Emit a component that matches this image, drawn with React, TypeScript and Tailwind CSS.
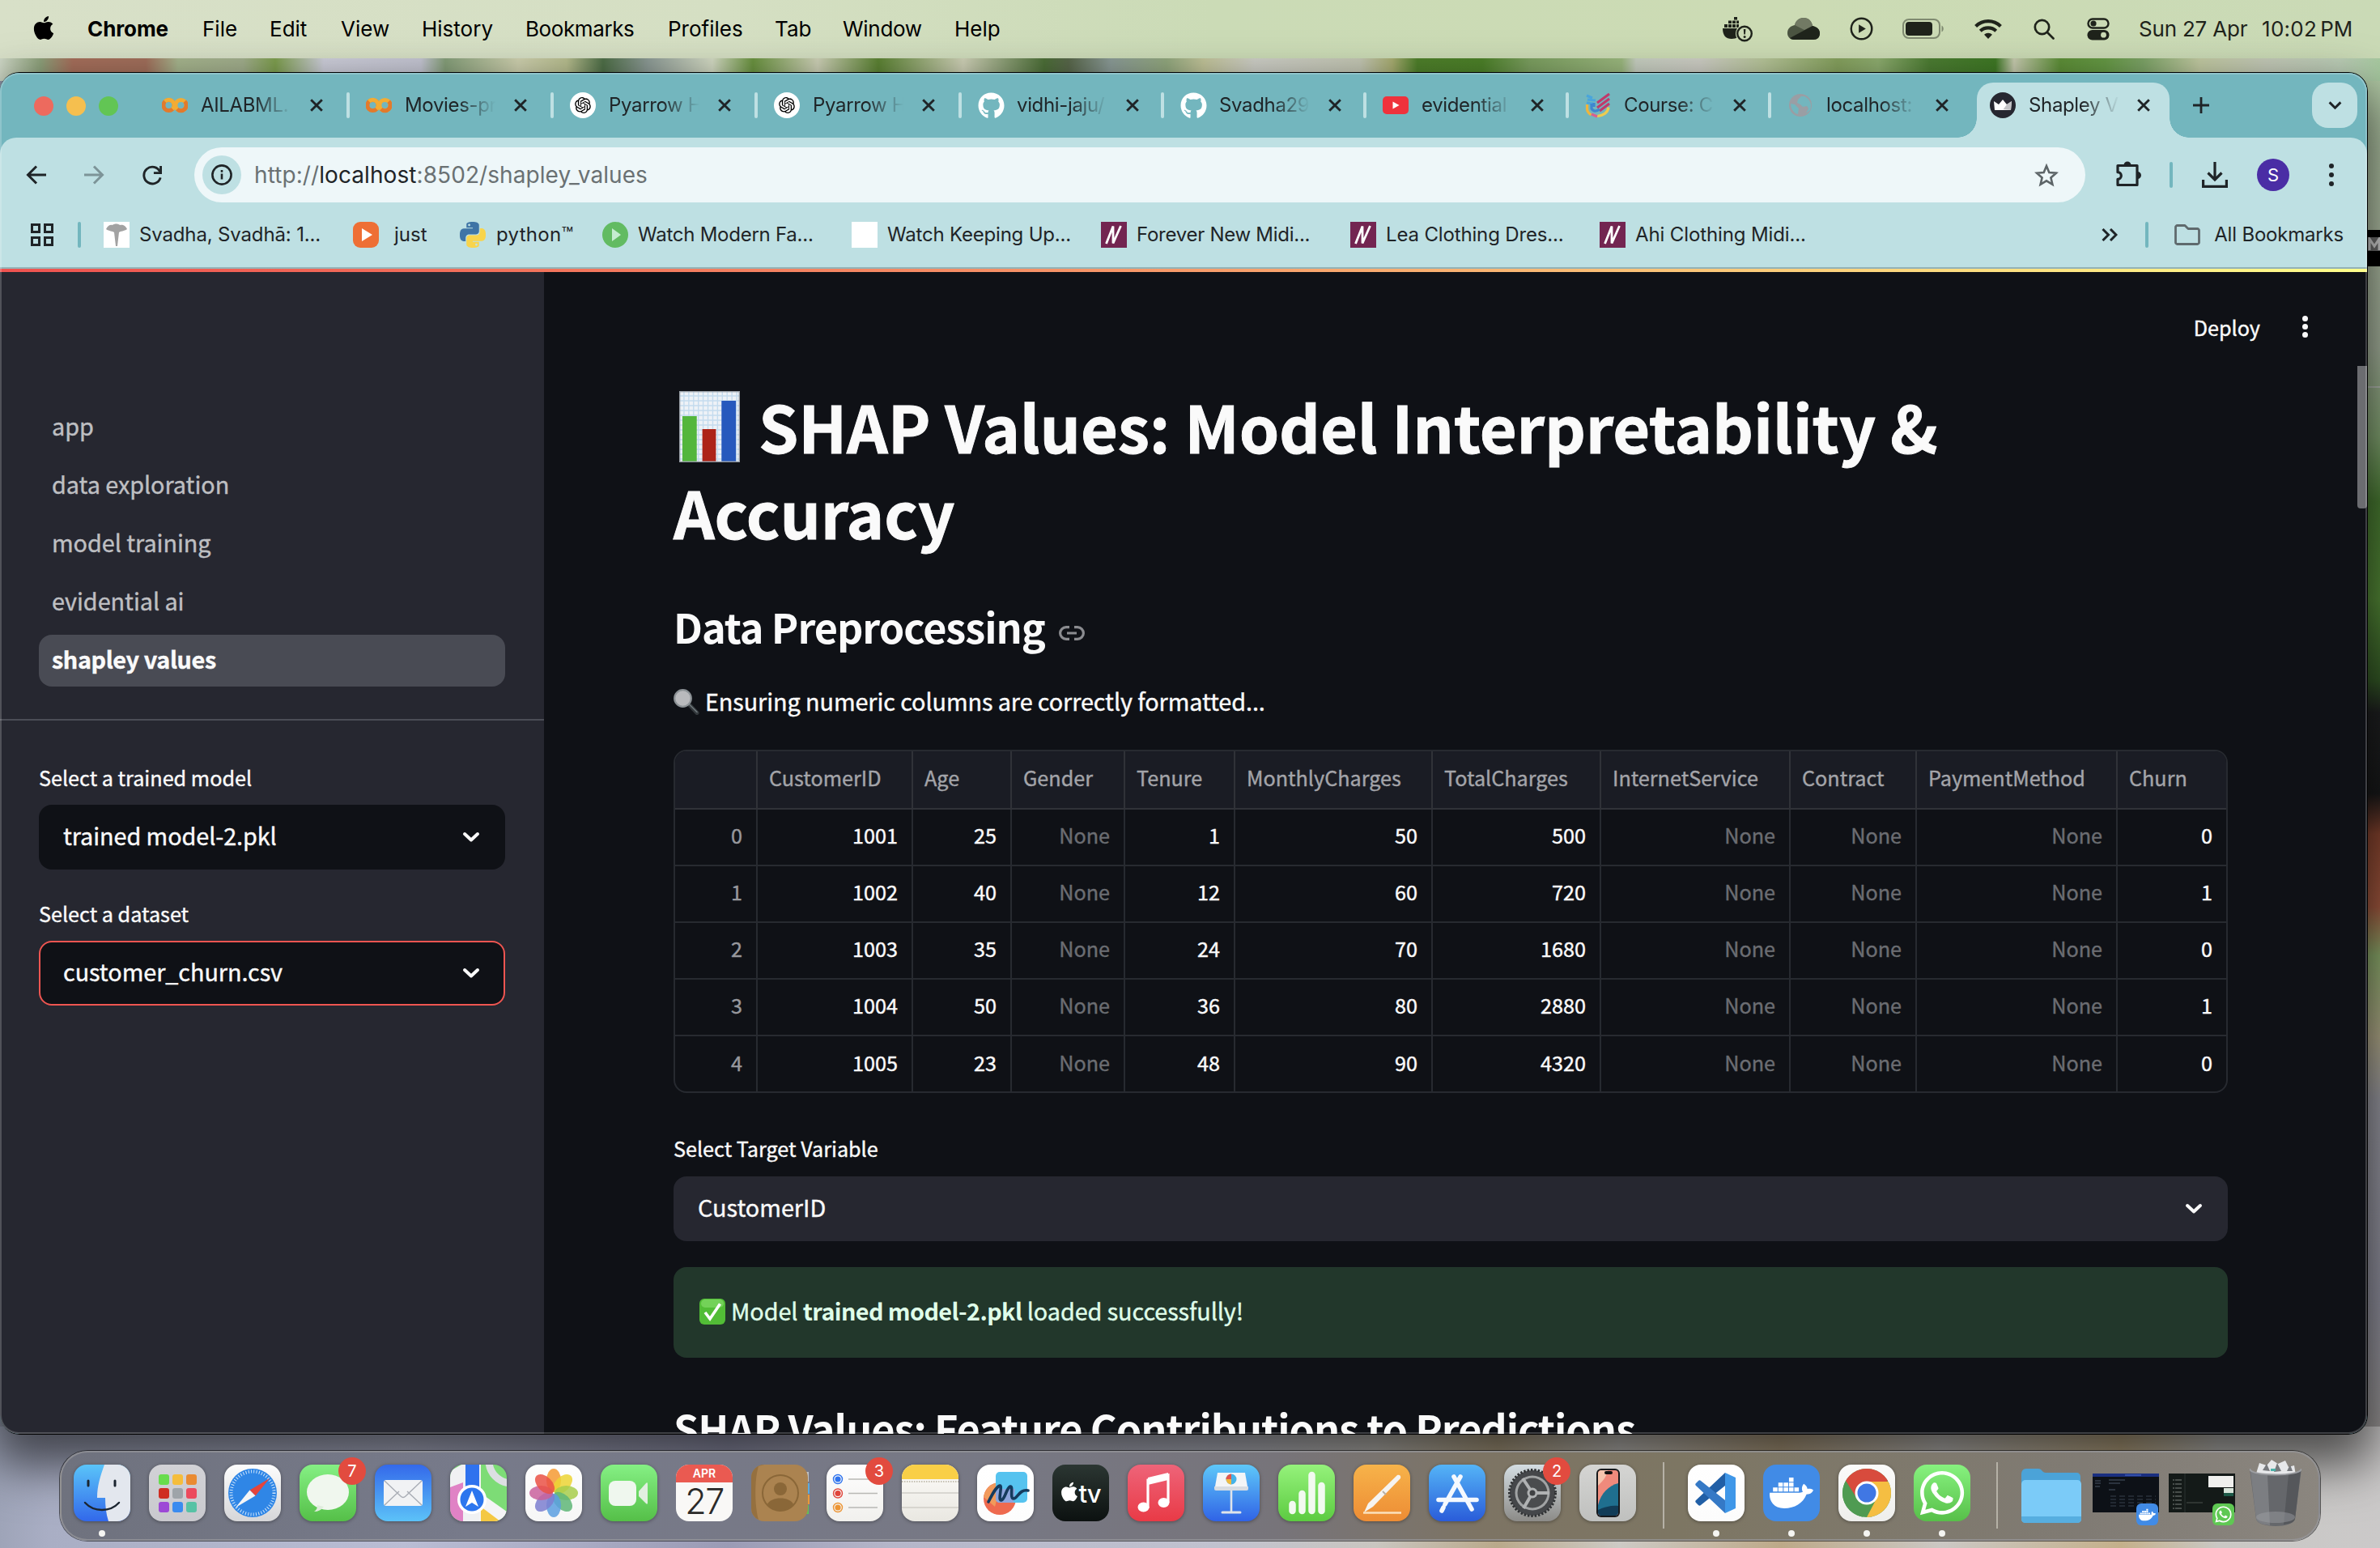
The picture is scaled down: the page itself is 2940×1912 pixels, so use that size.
import React from "react";
import { FaApple, FaDocker, FaGithub, FaWhatsapp } from "react-icons/fa";
import { RiOpenaiFill } from "react-icons/ri";

const SF = "font-['Inter',sans-serif]";
const SOURCE = "font-['Noto_Sans_CJK_SC',sans-serif] [-webkit-text-stroke:0.4px]";

/* ------------------------------------------------------------------ */
/* Menu bar                                                            */
/* ------------------------------------------------------------------ */

const menus = [
  { label: "File", w: "w-[83px]", t: "" },
  { label: "Edit", w: "w-[88px]", t: "" },
  { label: "View", w: "w-[100px]", t: "" },
  { label: "History", w: "w-[128px]", t: "" },
  { label: "Bookmarks", w: "w-[176px]", t: "tracking-[-0.4px]" },
  { label: "Profiles", w: "w-[132px]", t: "" },
  { label: "Tab", w: "w-[84px]", t: "" },
  { label: "Window", w: "w-[138px]", t: "tracking-[-0.3px]" },
  { label: "Help", w: "w-[80px]", t: "" },
];

function MenuBar() {
  return (
    <header className="flex h-[72px] w-full items-center bg-[linear-gradient(90deg,#d8e0c8_0px,#d5dfc3_900px,#cbdbb6_1500px,#ccdbb4_2200px,#cadab6_2940px)] pb-[1px] text-[26px] leading-none text-black">
      <FaApple className="mb-[2px] ml-[38px] h-[33px] w-[32px] shrink-0" />
      <div className="ml-[38px] w-[142px] shrink-0 font-bold tracking-[-0.1px]">Chrome</div>
      {menus.map((m) => (
        <div key={m.label} className={`${m.w} ${m.t} shrink-0`}>
          {m.label}
        </div>
      ))}
      <div className="grow" />
      <div className="flex shrink-0 items-center text-[#1f231b]">
        <svg viewBox="0 0 40 32" className="h-[32px] w-[40px]" fill="currentColor">
          <path d="M2 15h25l-1 4c-2 6-7 9-13 9C6 28 2 24 2 15z" />
          <path d="M4 10h4v4H4zM9 10h4v4H9zM14 10h4v4h-4zM19 10h3v4h-3zM9 5.500h4v3.500H9zM14 5.500h4v3.500h-4zM16 1h4v3.500h-4zM19 5.500h3v3.500h-3z" />
          <circle cx="29" cy="21.500" r="11" fill="#cbdab5" />
          <circle cx="29" cy="21.500" r="8.800" fill="none" stroke="currentColor" strokeWidth="2.400" />
          <path d="M27.800 16h2.600l-.5 6.500h-1.600z" />
          <circle cx="29.100" cy="25.500" r="1.500" />
        </svg>
        <svg viewBox="0 0 40 27" className="ml-[42px] h-[27px] w-[40px]">
          <path d="M20 0c-6 0-10 4-11 9C4 10 0 13 0 19c0 4 3 8 8 8h24c5 0 8-3 8-8 0-5-4-8-9-9C30 4 26 0 20 0z" fill="#4c5542" />
          <path d="M20 0c-6 0-10 4-11 9l12 6 10-5C30 4 26 0 20 0z" fill="#727a64" />
          <path d="M3 25l28-15c5 1 9 4 9 9 0 5-3 8-8 8H8c-2 0-4-1-5-2z" fill="#20251c" />
        </svg>
        <svg viewBox="0 0 30 30" className="ml-[37px] h-[29px] w-[29px]">
          <circle cx="15" cy="15" r="13.200" fill="none" stroke="currentColor" strokeWidth="2.600" />
          <path d="M11.500 9.500v11l9-5.500z" fill="currentColor" />
        </svg>
        <svg viewBox="0 0 52 26" className="ml-[36px] h-[26px] w-[52px]">
          <rect x="1" y="1" width="45" height="23" rx="7" fill="none" stroke="#7f8a70" strokeWidth="2" />
          <rect x="4" y="4" width="33" height="17" rx="4" fill="currentColor" />
          <path d="M48.500 8.500c3 1.500 3 6.500 0 8z" fill="#7f8a70" />
        </svg>
        <svg viewBox="0 0 34 26" className="ml-[37px] h-[26px] w-[34px]" fill="none" stroke="currentColor" strokeWidth="4.200">
          <path d="M1.600 9.500a22 22 0 0 1 30.800 0" />
          <path d="M7.300 15.200a14 14 0 0 1 19.400 0" />
          <path d="M17 25l-5-5.200a7 7 0 0 1 10 0z" fill="currentColor" stroke="none" />
        </svg>
        <svg viewBox="0 0 26 26" className="ml-[39px] h-[26px] w-[26px]" fill="none" stroke="currentColor" strokeWidth="2.700" strokeLinecap="round">
          <circle cx="10.500" cy="10.500" r="8.700" />
          <path d="M17 17l7.500 7.500" />
        </svg>
        <svg viewBox="0 0 28 28" className="ml-[40px] h-[28px] w-[28px]">
          <rect x="1.500" y="1.500" width="25" height="11" rx="5.500" fill="none" stroke="currentColor" strokeWidth="2.400" />
          <circle cx="8" cy="7" r="3.600" fill="currentColor" />
          <rect x="0.500" y="15" width="27" height="12.500" rx="6.200" fill="currentColor" />
          <circle cx="20.500" cy="21.200" r="3.400" fill="#cbdab5" />
        </svg>
        <div className="ml-[36px] w-[152px] whitespace-nowrap tracking-[-0.2px]">Sun 27 Apr</div>
        <div className="flex w-[146px] gap-[4px] whitespace-nowrap tracking-[0.300px]">
          <span>10:02</span>
          <span className="tracking-[-0.2px]">PM</span>
        </div>
      </div>
    </header>
  );
}

/* ------------------------------------------------------------------ */
/* Tab strip                                                           */
/* ------------------------------------------------------------------ */

const Colab = () => (
  <svg viewBox="0 0 32 32" className="h-[32px] w-[32px]" fill="none" strokeWidth="5">
    <circle cx="8.500" cy="16" r="6.600" stroke="#e27a2c" />
    <circle cx="23.500" cy="16" r="6.600" stroke="#f3ac33" />
    <path d="M28.200 11.300a6.600 6.600 0 0 1-9.400 9.400" stroke="#e27a2c" />
    <path d="M13.200 11.300a6.600 6.600 0 0 0-9.400 0M13.200 11.300a6.600 6.600 0 0 1 0 9.400" stroke="#f3ac33" />
  </svg>
);

const OpenAI = () => (
  <div className="flex h-[32px] w-[32px] items-center justify-center rounded-full bg-white text-black">
    <RiOpenaiFill className="h-[24px] w-[24px]" />
  </div>
);

const GitHub = () => <FaGithub className="h-[33px] w-[33px] text-white" />;

const YouTube = () => (
  <svg viewBox="0 0 32 32" className="h-[32px] w-[32px]">
    <rect y="5" width="32" height="22" rx="5" fill="#ef323c" />
    <path d="M12.500 11.500v9l8-4.500z" fill="#fff" />
  </svg>
);

const Course = () => (
  <svg viewBox="0 0 32 32" className="h-[32px] w-[32px]" fill="none" strokeWidth="3.200">
    <path d="M2 4l7 3M3 9l10 1M2 13l8 1" stroke="#4aa5dc" />
    <path d="M30 2L15 13M30 8L15 19M30 14L18 23" stroke="#c03a6b" />
    <path d="M8 14v6c2 4 6 4 10 1M11 13v5" stroke="#3f86cf" />
    <path d="M2.500 15v5c0 3 2 6 5 8" stroke="#f0b53c" />
    <path d="M15 29.500c8-1 13-4 14-11" stroke="#eecb50" />
    <path d="M8 27l7 3" stroke="#d9608e" />
  </svg>
);

const Globe = () => (
  <svg viewBox="0 0 32 32" className="h-[32px] w-[32px]">
    <circle cx="16" cy="16" r="14" fill="#9a9ea4" />
    <path d="M17 5l-4 4-1 4 4 2 3 3 5-1 2 3-3 6 5-4c3-8-1-14-7-17zM4 14l5 1 5 5-1 7-3-1C6 23 4 19 4 14z" fill="#73b6be" />
  </svg>
);

const Crown = () => (
  <svg viewBox="0 0 32 32" className="h-[32px] w-[32px]">
    <circle cx="16" cy="16" r="16" fill="#262730" />
    <path d="M6 22L5 11l6 4 5-6 5 6 6-4-1 11z" fill="#fff" />
    <path d="M16 9l5 6-5 7h10l1-11-6 4z" fill="#c3c3c6" />
    <path d="M6 22l10-1 10 1z" fill="#fff" />
  </svg>
);

const TabClose = () => (
  <svg viewBox="0 0 16 16" className="h-[16px] w-[16px] shrink-0" fill="none" stroke="#1f2427" strokeWidth="2.900">
    <path d="M1.200 1.200l13.600 13.600M14.800 1.200L1.200 14.800" />
  </svg>
);

const tabs = [
  { icon: <Colab />, title: "AILABML.", w: "w-[252px]", sep: true },
  { icon: <Colab />, title: "Movies-pr", w: "w-[252px]", sep: true },
  { icon: <OpenAI />, title: "Pyarrow H", w: "w-[252px]", sep: true },
  { icon: <OpenAI />, title: "Pyarrow H", w: "w-[252px]", sep: true },
  { icon: <GitHub />, title: "vidhi-jaju/", w: "w-[250px]", sep: true },
  { icon: <GitHub />, title: "Svadha29", w: "w-[250px]", sep: true },
  { icon: <YouTube />, title: "evidential", w: "w-[250px]", sep: true },
  { icon: <Course />, title: "Course: C", w: "w-[250px]", sep: true },
  { icon: <Globe />, title: "localhost:", w: "w-[254px]", sep: false },
];

const FADE =
  "[mask-image:linear-gradient(90deg,#000_0px,#000_66px,transparent_112px)]";

function TabTitle({ children }: { children: React.ReactNode }) {
  return (
    <div className={`ml-[15px] w-[112px] shrink-0 whitespace-nowrap text-[24px] leading-[32px] tracking-[-0.350px] text-[#1f2427] ${FADE}`}>
      {children}
    </div>
  );
}

function TabStrip() {
  return (
    <div className="flex h-[80px] shrink-0 items-stretch bg-[#73b6be]">
      <div className="flex w-[180px] shrink-0 items-center gap-[16px] pl-[42px] pt-[2px]">
        <div className="h-[24px] w-[24px] rounded-full bg-[#ed6a5e]" />
        <div className="h-[24px] w-[24px] rounded-full bg-[#f5bf4f]" />
        <div className="h-[24px] w-[24px] rounded-full bg-[#62c554]" />
      </div>
      {tabs.map((t, i) => (
        <div key={i} className={`${t.w} flex shrink-0 items-center pl-[20px]`}>
          <div className="w-[33px] shrink-0">{t.icon}</div>
          <TabTitle>{t.title}</TabTitle>
          <div className="ml-[23px]">
            <TabClose />
          </div>
          <div className="grow" />
          {t.sep && <div className="h-[32px] w-[4px] rounded-full bg-[#bee0e3]" />}
        </div>
      ))}
      <div className="relative mt-[12px] flex w-[238px] shrink-0 items-center rounded-t-[20px] bg-[#bee0e3] pb-[12px] pl-[16px]">
        <div className="absolute bottom-0 left-[-24px] h-[24px] w-[24px] bg-[radial-gradient(circle_at_0_0,transparent_23.500px,#bee0e3_24px)]" />
        <div className="absolute bottom-0 right-[-24px] h-[24px] w-[24px] bg-[radial-gradient(circle_at_100%_0,transparent_23.500px,#bee0e3_24px)]" />
        <div className="w-[33px] shrink-0">
          <Crown />
        </div>
        <TabTitle>Shapley V</TabTitle>
        <div className="ml-[22px]">
          <TabClose />
        </div>
      </div>
      <div className="ml-[29px] flex items-center">
        <svg viewBox="0 0 20 20" className="h-[20px] w-[20px]" stroke="#1f2427" strokeWidth="2.800">
          <path d="M10 0v20M0 10h20" />
        </svg>
      </div>
      <div className="grow" />
      <div className="mr-[12px] mt-[12px] flex h-[56px] w-[56px] items-center justify-center rounded-[20px] bg-[#bee0e3]">
        <svg viewBox="0 0 18 12" className="h-[11px] w-[17px]" fill="none" stroke="#1f2427" strokeWidth="3.200">
          <path d="M1.500 1.500L9 9l7.500-7.500" />
        </svg>
      </div>
    </div>
  );
}

/* ------------------------------------------------------------------ */
/* Toolbar and bookmarks                                               */
/* ------------------------------------------------------------------ */

function Toolbar() {
  return (
    <div className="flex h-[80px] shrink-0 items-center pt-[12px] text-[#1f2427]">
      <svg viewBox="0 0 26 24" className="ml-[32px] h-[24px] w-[26px] shrink-0" fill="none" stroke="currentColor" strokeWidth="3">
        <path d="M25 12H3M13 1.500L2.500 12 13 22.500" />
      </svg>
      <svg viewBox="0 0 26 24" className="ml-[45px] h-[24px] w-[26px] shrink-0" fill="none" stroke="#7d9498" strokeWidth="3">
        <path d="M1 12h22M13 1.500L23.500 12 13 22.500" />
      </svg>
      <svg viewBox="0 0 26 26" className="ml-[46px] h-[25px] w-[26px] shrink-0" fill="none" stroke="currentColor" strokeWidth="3">
        <path d="M23 8.500A10.800 10.800 0 1 0 23.600 16" />
        <path d="M24 1v9h-9" />
      </svg>
      <div className="ml-[39px] flex h-[68px] w-[2336px] shrink-0 items-center rounded-full bg-[#eef7f9] pl-[10px]">
        <div className="flex h-[48px] w-[48px] shrink-0 items-center justify-center rounded-full bg-[#bee0e3]">
          <svg viewBox="0 0 26 26" className="h-[26px] w-[26px]" fill="none" stroke="#1f2427" strokeWidth="2.600">
            <circle cx="13" cy="13" r="11.600" />
            <path d="M13 11.500v7M13 7v2.800" />
          </svg>
        </div>
        <div className="ml-[16px] whitespace-nowrap text-[28px] leading-none tracking-[0.080px] text-[#6a7173]">
          http://<span className="text-[#1f2427]">localhost</span>:8502/shapley_values
        </div>
        <div className="grow" />
        <svg viewBox="0 0 30 29" className="mr-[33px] h-[29px] w-[30px]" fill="none" stroke="#5d6568" strokeWidth="2.600">
          <path d="M15 3l3.300 8 8.700.7-6.600 5.700 2 8.400L15 21.300l-7.400 4.500 2-8.400L3 11.700l8.700-.7z" />
        </svg>
      </div>
      <svg viewBox="0 0 34 34" className="mb-[2px] ml-[37px] h-[34px] w-[34px] shrink-0" fill="none" stroke="currentColor" strokeWidth="3.200">
        <path d="M3 6.500h24v24H3v-7.200a4.200 4.200 0 0 0 0-8.600z" strokeLinejoin="round" />
        <path d="M10.500 6a4.500 4.500 0 0 1 9 0zM27.500 14a4.500 4.500 0 0 1 0 9z" fill="currentColor" stroke="none" />
      </svg>
      <div className="ml-[33px] h-[32px] w-[4px] shrink-0 rounded-full bg-[#73b6be]" />
      <svg viewBox="0 0 32 32" className="ml-[36px] h-[32px] w-[32px] shrink-0" fill="none" stroke="currentColor" strokeWidth="3.200">
        <path d="M16 0v21M7.500 13.500L16 22l8.500-8.500M1.600 22v8.400h28.800V22" />
      </svg>
      <div className="ml-[36px] flex h-[40px] w-[40px] shrink-0 items-center justify-center rounded-full bg-[#4a2da5] text-[22px] leading-none text-white">
        S
      </div>
      <div className="ml-[49px] flex flex-col items-center gap-[5px]">
        <div className="h-[6px] w-[6px] rounded-full bg-[#1f2427]" />
        <div className="h-[6px] w-[6px] rounded-full bg-[#1f2427]" />
        <div className="h-[6px] w-[6px] rounded-full bg-[#1f2427]" />
      </div>
    </div>
  );
}

const NIcon = () => (
  <svg viewBox="0 0 32 32" className="h-[32px] w-[32px]">
    <rect width="32" height="32" fill="#732551" />
    <path d="M6.500 27L15 5.500 15 26.500 24.500 5" fill="none" stroke="#fff" strokeWidth="2.800" strokeLinejoin="bevel" />
  </svg>
);

const bookmarks = [
  {
    icon: (
      <svg viewBox="0 0 32 32" className="h-[32px] w-[32px]">
        <rect width="32" height="32" fill="#fff" />
        <path d="M3 9c2-5 6-6 8-5 2-2 7-2 9 0 3-1 7 0 9 5-4 3-8 2-10 4l-2 17h-2l-2-17c-2-2-6-1-10-4z" fill="#a2a2a2" />
      </svg>
    ),
    title: "Svadha, Svadhā: 1...",
    w: "w-[308px]",
    gap: "ml-[12px]",
    t: "tracking-[-0.150px]",
  },
  {
    icon: (
      <svg viewBox="0 0 32 32" className="h-[32px] w-[32px]">
        <rect width="32" height="32" rx="9" fill="#ee6f35" />
        <path d="M11 8v16l13-8z" fill="#fff" />
      </svg>
    ),
    title: "just",
    w: "w-[132px]",
    gap: "ml-[19px]",
    t: "",
  },
  {
    icon: (
      <svg viewBox="0 0 24 24" className="h-[32px] w-[32px]">
        <path fill="#3f74a6" d="M14.250.18l.9.2.73.26.59.3.45.32.34.34.25.34.16.33.1.3.04.26.02.2-.01.13V8.500l-.05.63-.13.55-.21.46-.26.38-.3.31-.33.25-.35.19-.35.14-.33.1-.3.07-.26.04-.21.02H8.770l-.69.05-.59.14-.5.22-.41.27-.33.32-.27.35-.2.36-.15.37-.1.35-.07.32-.04.27-.02.21v3.060H3.170l-.21-.03-.28-.07-.32-.12-.35-.18-.36-.26-.36-.36-.35-.46-.32-.59-.28-.73-.21-.88-.14-1.050-.05-1.230.06-1.220.16-1.040.24-.87.32-.71.36-.57.4-.44.42-.33.42-.24.4-.16.36-.1.32-.05.24-.01h.16l.06.01h8.160v-.83H6.180l-.01-2.750-.02-.37.05-.34.11-.31.17-.28.25-.26.31-.23.38-.2.44-.18.51-.15.58-.12.64-.1.71-.06.77-.04.84-.02 1.270.05zm-6.300 1.980l-.23.33-.08.41.08.41.23.34.33.22.41.09.41-.09.33-.22.23-.34.08-.41-.08-.41-.23-.33-.33-.22-.41-.09-.41.09z" />
        <path fill="#f8d44c" d="M21.040 6.110l.28.06.32.12.35.18.36.27.36.35.35.47.32.59.28.73.21.88.14 1.040.05 1.230-.06 1.230-.16 1.040-.24.86-.32.71-.36.57-.4.45-.42.33-.42.24-.4.16-.36.09-.32.05-.24.02-.16-.01h-8.220v.82h5.840l.01 2.760.02.36-.05.34-.11.31-.17.29-.25.25-.31.24-.38.2-.44.17-.51.15-.58.13-.64.09-.71.07-.77.04-.84.01-1.270-.04-1.070-.14-.9-.2-.73-.25-.59-.3-.45-.33-.34-.34-.25-.34-.16-.33-.1-.3-.04-.25-.02-.2.01-.13v-5.340l.05-.64.13-.54.21-.46.26-.38.3-.32.33-.24.35-.2.35-.14.33-.1.3-.06.26-.04.21-.02.13-.01h5.840l.69-.05.59-.14.5-.21.41-.28.33-.32.27-.35.2-.36.15-.36.1-.35.07-.32.04-.28.02-.21V6.070h2.090l.14.01zm-6.470 14.250l-.23.33-.08.41.08.41.23.33.33.23.41.08.41-.08.33-.23.23-.33.08-.41-.08-.41-.23-.33-.33-.23-.41-.08-.41.08z" />
      </svg>
    ),
    title: "python™",
    w: "w-[176px]",
    gap: "ml-[13px]",
    t: "tracking-[0.300px]",
  },
  {
    icon: (
      <svg viewBox="0 0 32 32" className="h-[32px] w-[32px]">
        <circle cx="16" cy="16" r="16" fill="#62bb62" />
        <path d="M12 8v16l11-8z" fill="#c5ecd0" />
      </svg>
    ),
    title: "Watch Modern Fa...",
    w: "w-[308px]",
    gap: "ml-[12px]",
    t: "tracking-[-0.250px]",
  },
  {
    icon: <div className="h-[32px] w-[32px] bg-white" />,
    title: "Watch Keeping Up...",
    w: "w-[308px]",
    gap: "ml-[12px]",
    t: "tracking-[-0.200px]",
  },
  { icon: <NIcon />, title: "Forever New Midi...", w: "w-[308px]", gap: "ml-[12px]", t: "tracking-[-0.270px]" },
  { icon: <NIcon />, title: "Lea Clothing Dres...", w: "w-[308px]", gap: "ml-[12px]", t: "tracking-[-0.150px]" },
  { icon: <NIcon />, title: "Ahi Clothing Midi...", w: "w-[308px]", gap: "ml-[12px]", t: "tracking-[-0.120px]" },
];

function Bookmarks() {
  return (
    <div className="flex h-[80px] shrink-0 items-center text-[24px] leading-none text-[#1f2427]">
      <svg viewBox="0 0 28 28" className="ml-[38px] h-[28px] w-[28px] shrink-0" fill="none" stroke="currentColor" strokeWidth="3">
        <path d="M1.500 1.500h9v9h-9zM17.500 1.500h9v9h-9zM1.500 17.500h9v9h-9zM17.500 17.500h9v9h-9z" />
      </svg>
      <div className="ml-[30px] mr-[28px] h-[32px] w-[4px] shrink-0 rounded-full bg-[#73b6be]" />
      {bookmarks.map((b, i) => (
        <div key={i} className={`${b.w} flex shrink-0 items-center whitespace-nowrap`}>
          {b.icon}
          <span className={`${b.gap} ${b.t} leading-[32px]`}>{b.title}</span>
        </div>
      ))}
      <div className="grow" />
      <svg viewBox="0 0 20 16" className="h-[16px] w-[20px]" fill="none" stroke="currentColor" strokeWidth="3">
        <path d="M1.500 1L8.500 8l-7 7M11 1l7 7-7 7" />
      </svg>
      <div className="ml-[34px] mr-[32px] h-[32px] w-[4px] shrink-0 rounded-full bg-[#73b6be]" />
      <svg viewBox="0 0 32 26" className="h-[26px] w-[32px]" fill="none" stroke="#5f6a6d" strokeWidth="2.800" strokeLinejoin="round">
        <path d="M1.500 3.500v19c0 1 1 2 2 2h25c1 0 2-1 2-2v-15c0-1-1-2-2-2H17l-4-4H3.500c-1 0-2 1-2 2z" />
      </svg>
      <div className="ml-[17px] mr-[29px] whitespace-nowrap tracking-[-0.200px]">All Bookmarks</div>
    </div>
  );
}

/* ------------------------------------------------------------------ */
/* Streamlit page                                                      */
/* ------------------------------------------------------------------ */

const Chevron = () => (
  <svg viewBox="0 0 22 14" className="h-[14px] w-[22px] shrink-0" fill="none" stroke="#fafafa" strokeWidth="4" strokeLinecap="round" strokeLinejoin="round">
    <path d="M3 3l8 7.500L19 3" />
  </svg>
);

const pages = ["app", "data exploration", "model training", "evidential ai"];

function Sidebar() {
  return (
    <aside className="flex w-[672px] shrink-0 flex-col bg-[#262730] pl-[48px] text-[#fafafa]">
      <nav className="flex flex-col gap-[8px] pt-[160px]">
        {pages.map((p) => (
          <div
            key={p}
            className="flex h-[64px] w-[576px] items-center pb-[3px] pl-[16px] text-[28.800px] leading-none tracking-[-0.050px] text-[#bebfc2]"
          >
            {p}
          </div>
        ))}
        <div className="flex h-[64px] w-[576px] items-center rounded-[16px] bg-[#494b54] pb-[3px] pl-[16px] text-[28.800px] font-bold leading-none tracking-[-0.400px]">
          shapley values
        </div>
      </nav>
      <div className="ml-[-48px] mt-[40px] h-[2px] bg-[#4b4d56]" />
      <div className="mt-[53px] flex h-[36px] items-center text-[25.200px] leading-none">Select a trained model</div>
      <div className="mt-[15px] flex h-[80px] w-[576px] items-center justify-between rounded-[16px] bg-[#0f1116] pl-[30px] pr-[31px] text-[28.800px] leading-none tracking-[-0.080px]">
        <span className="mb-[3px]">trained model-2.pkl</span>
        <Chevron />
      </div>
      <div className="mt-[37px] flex h-[36px] items-center text-[25.200px] leading-none">Select a dataset</div>
      <div className="mt-[15px] flex h-[80px] w-[576px] items-center justify-between rounded-[16px] border-2 border-[#ee5551] bg-[#0f1116] pl-[28px] pr-[29px] text-[28.800px] leading-none tracking-[-0.050px]">
        <span className="mb-[3px]">customer_churn.csv</span>
        <Chevron />
      </div>
    </aside>
  );
}

const columns = [
  { name: "CustomerID", w: "w-[192px]" },
  { name: "Age", w: "w-[122px]" },
  { name: "Gender", w: "w-[140px]" },
  { name: "Tenure", w: "w-[136px]" },
  { name: "MonthlyCharges", w: "w-[244px]" },
  { name: "TotalCharges", w: "w-[208px]" },
  { name: "InternetService", w: "w-[234px]" },
  { name: "Contract", w: "w-[156px]" },
  { name: "PaymentMethod", w: "w-[248px]" },
  { name: "Churn", w: "w-[134px]" },
];

const rows = [
  ["1001", "25", "None", "1", "50", "500", "None", "None", "None", "0"],
  ["1002", "40", "None", "12", "60", "720", "None", "None", "None", "1"],
  ["1003", "35", "None", "24", "70", "1680", "None", "None", "None", "0"],
  ["1004", "50", "None", "36", "80", "2880", "None", "None", "None", "1"],
  ["1005", "23", "None", "48", "90", "4320", "None", "None", "None", "0"],
];

function DataTable() {
  return (
    <div className="flex h-[424px] w-[1920px] shrink-0 flex-col overflow-hidden rounded-[16px] border-2 border-[#272a30] text-[25.200px] leading-none">
      <div className="flex h-[72px] shrink-0 border-b-2 border-[#303238] bg-[#1a1c24] text-[#a3a4a9]">
        <div className="w-[102px] shrink-0 border-r-2 border-[#303238]" />
        {columns.map((c, i) => (
          <div
            key={c.name}
            className={`${c.w} flex shrink-0 items-center pb-[4px] pl-[14px] ${i < 9 ? "border-r-2 border-[#303238]" : "grow"}`}
          >
            {c.name}
          </div>
        ))}
      </div>
      {rows.map((r, ri) => (
        <div key={ri} className={`flex h-[70px] shrink-0 ${ri < 4 ? "border-b-2 border-[#272a30]" : ""}`}>
          <div className="flex w-[102px] shrink-0 items-center justify-end border-r-2 border-[#272a30] pb-[5px] pr-[17px] text-[#97989d]">
            {ri}
          </div>
          {r.map((v, i) => (
            <div
              key={i}
              className={`${columns[i].w} flex shrink-0 items-center justify-end pb-[5px] pr-[17px] ${i < 9 ? "border-r-2 border-[#272a30]" : ""} ${v === "None" ? "text-[#6b6d72]" : "text-[#fafafa]"}`}
            >
              {v}
            </div>
          ))}
        </div>
      ))}
    </div>
  );
}

const BarChartEmoji = () => (
  <svg viewBox="0 0 76 88" preserveAspectRatio="none" className="ml-[7px] mr-[23px] inline-block h-[88px] w-[75px] align-[-11px]">
    <rect width="76" height="88" fill="#eef2f7" />
    <path
      d="M0 6h76M0 12h76M0 18h76M0 24h76M0 30h76M0 36h76M0 42h76M0 48h76M0 54h76M0 60h76M0 66h76M0 72h76M0 78h76M0 84h76M6 0v88M12 0v88M18 0v88M24 0v88M30 0v88M36 0v88M42 0v88M48 0v88M54 0v88M60 0v88M66 0v88M72 0v88"
      stroke="#c4dbee"
      strokeWidth="1.400"
    />
    <rect x="4" y="31" width="18" height="57" fill="#53b63c" />
    <rect x="29" y="47" width="17" height="41" fill="#ad2318" />
    <rect x="53" y="12" width="18" height="76" fill="#2659bd" />
    <rect x=".7" y=".7" width="74.600" height="86.600" fill="none" stroke="#9aa0a8" strokeWidth="1.400" />
  </svg>
);

function Main() {
  return (
    <main className="flex grow flex-col overflow-hidden bg-[#0f1116] text-[#fafafa]">
      <div className="flex h-[137px] shrink-0 items-start justify-end pr-[73px] pt-[50px]">
        <div className="text-[25.200px] leading-[36px]">Deploy</div>
        <div className="ml-[52px] mt-[4px] flex flex-col gap-[3px]">
          <div className="h-[7px] w-[7px] rounded-full bg-[#fafafa]" />
          <div className="h-[7px] w-[7px] rounded-full bg-[#fafafa]" />
          <div className="h-[7px] w-[7px] rounded-full bg-[#fafafa]" />
        </div>
      </div>
      <div className="flex grow flex-col pl-[160px]">
        <h1 className="h-[211px] w-[1920px] shrink-0 whitespace-nowrap text-[79.200px] font-bold leading-[105.600px] tracking-[-0.150px] [-webkit-text-stroke:0.9px]">
          <BarChartEmoji />
          SHAP Values: Model Interpretability &amp;
          <br />
          Accuracy
        </h1>
        <h2 className="mt-[60px] flex h-[68px] shrink-0 items-center whitespace-nowrap text-[50.400px] font-bold leading-none tracking-[-1.050px] [-webkit-text-stroke:0px]">
          <span className="mb-[7px]">Data Preprocessing</span>
          <svg viewBox="0 0 32 18" className="ml-[17px] mt-[8px] h-[18px] w-[32px]" fill="none" stroke="#8b8c90" strokeWidth="3.200">
            <path d="M13 1.600H9a7.400 7.400 0 0 0 0 14.800h4M19 1.600h4a7.400 7.400 0 0 1 0 14.800h-4M10 9h12" />
          </svg>
        </h2>
        <div className="mt-[32px] flex h-[51px] shrink-0 items-center text-[28.800px] leading-none tracking-[-0.090px]">
          <svg viewBox="0 0 32 32" className="mb-[6px] mr-[7px] h-[32px] w-[32px]">
            <path d="M20 20l9 9.500" stroke="#33383c" strokeWidth="5" strokeLinecap="round" />
            <path d="M20 19.500l9 9" stroke="#6d767b" strokeWidth="1.600" strokeLinecap="round" />
            <circle cx="11.500" cy="11.500" r="10.300" fill="#b9babd" stroke="#8c9296" strokeWidth="2.200" />
          </svg>
          <p className="mb-[7px]">Ensuring numeric columns are correctly formatted...</p>
        </div>
        <div className="h-[31px] shrink-0" />
        <DataTable />
        <div className="mt-[51px] flex h-[36px] shrink-0 items-center text-[25.200px] leading-none">Select Target Variable</div>
        <div className="mt-[16px] flex h-[80px] w-[1920px] shrink-0 items-center justify-between rounded-[16px] bg-[#262730] pl-[30px] pr-[31px] text-[28.800px] leading-none">
          <span className="mb-[3px]">CustomerID</span>
          <Chevron />
        </div>
        <div className="mt-[32px] flex h-[112px] w-[1920px] shrink-0 items-center rounded-[16px] bg-[#22372b] pl-[32px] text-[28.800px] leading-none tracking-[-0.080px] text-[#dffde9]">
          <svg viewBox="0 0 32 32" className="mb-[2px] mr-[7px] h-[32px] w-[32px]">
            <rect width="32" height="32" rx="6" fill="#52bd36" />
            <rect x="2" y="1" width="28" height="10" rx="5" fill="#8be070" opacity=".6" />
            <path d="M7 17l6 8L25.500 6.500" fill="none" stroke="#fff" strokeWidth="3.600" />
          </svg>
          <p className="mb-[3px]">
            Model <b className="tracking-[-0.600px] [-webkit-text-stroke:0px]">trained model-2.pkl</b> loaded successfully!
          </p>
        </div>
        <h2 className="mt-[53px] shrink-0 whitespace-nowrap text-[50.400px] font-bold leading-[68px] tracking-[-1.080px] [-webkit-text-stroke:0px]">
          SHAP Values: Feature Contributions to Predictions
        </h2>
      </div>
    </main>
  );
}

function BrowserWindow() {
  return (
    <div className="absolute left-0 top-[89px] h-[1683px] w-[2925px] rounded-[24px] shadow-[0_30px_60px_10px_rgba(0,0,0,0.6)]">
      <div className="flex h-full w-full flex-col overflow-hidden rounded-[24px] border border-l-0 border-black bg-[#73b6be]">
        <TabStrip />
        <div className="flex shrink-0 flex-col rounded-t-[20px] bg-[#bee0e3]">
          <Toolbar />
          <Bookmarks />
          <div className="h-[2px] bg-[#93b2b6]" />
        </div>
        <div className="h-[4px] shrink-0 bg-[linear-gradient(90deg,#ef5350,#f79b6a_50%,#ffff8c)]" />
        <div className={`flex min-h-0 grow ${SOURCE}`}>
          <Sidebar />
          <Main />
        </div>
      </div>
      <div className="absolute right-[1px] top-[363px] h-[176px] w-[12px] rounded-b-[4px] bg-[#6b6c70]" />
      <div className="absolute inset-0 bottom-[1px] right-[1px] top-[1px] rounded-[23px] border-2 border-white/20" />
    </div>
  );
}

/* ------------------------------------------------------------------ */
/* Dock                                                                */
/* ------------------------------------------------------------------ */

function Tile({
  id,
  from,
  to,
  children,
}: {
  id: string;
  from: string;
  to: string;
  children?: React.ReactNode;
}) {
  return (
    <svg viewBox="0 0 70 70" className="h-[70px] w-[70px] overflow-visible drop-shadow-[0_1px_2px_rgba(0,0,0,0.35)]">
      <defs>
        <linearGradient id={id} x1="0" y1="0" x2="0" y2="1">
          <stop offset="0" stopColor={from} />
          <stop offset="1" stopColor={to} />
        </linearGradient>
        <clipPath id={`${id}-c`}>
          <rect width="70" height="70" rx="16" />
        </clipPath>
      </defs>
      <rect width="70" height="70" rx="16" fill={`url(#${id})`} />
      <g clipPath={`url(#${id}-c)`}>{children}</g>
    </svg>
  );
}

const Finder = () => (
  <Tile id="finder" from="#5ac4f9" to="#3268ea">
    <path d="M38 0c-5 14-9 26-9 41h10c0 10 1 20 4 29h27V0z" fill="#e3e7ee" />
    <path d="M18 20v6M51 20v6" stroke="#1b2530" strokeWidth="3" strokeLinecap="round" />
    <path d="M14 47c11 12 31 12 42 0" fill="none" stroke="#1b2530" strokeWidth="2.400" strokeLinecap="round" />
  </Tile>
);

const launch = [
  ["#68dc4d", "#f5bd3c", "#ea8b32"],
  ["#cf2d22", "#9ea4a9", "#ec4a5d"],
  ["#9d49d6", "#3a8bef", "#57c2a5"],
];
const Launchpad = () => (
  <Tile id="launch" from="#d2d2d6" to="#c9c9ce">
    {launch.map((r, y) =>
      r.map((c, x) => <rect key={c} x={12 + x * 17} y={12 + y * 17} width="13" height="13" rx="3" fill={c} />)
    )}
  </Tile>
);

const Safari = () => (
  <Tile id="safari" from="#fdfdfd" to="#d6d6d8">
    <circle cx="35" cy="35" r="30" fill="#2f86e6" />
    <circle cx="35" cy="35" r="26.500" fill="none" stroke="#cfe5fb" strokeWidth="4" strokeDasharray="1 2.300" />
    <path d="M56 17L38.500 38.500l-7-7z" fill="#e5443c" />
    <path d="M14 53l17.500-21.500 7 7z" fill="#f4f5f7" />
  </Tile>
);

const Messages = () => (
  <Tile id="msg" from="#85f084" to="#55bf48">
    <ellipse cx="35" cy="34" rx="26" ry="22" fill="#f0f7ee" />
    <path d="M22 50c0 4-1 6-4 8 5 0 9-2 12-6z" fill="#e0ecdd" />
  </Tile>
);

const Mail = () => (
  <Tile id="mail" from="#3469ea" to="#5cc2f8">
    <rect x="11" y="19" width="48" height="32" rx="3" fill="#f1f2f4" />
    <path d="M12 50l18-17M58 50L40 33M12 20l20 19c2 2 4 2 6 0l20-19" fill="none" stroke="#a9adb5" strokeWidth="1.400" />
  </Tile>
);

const Maps = () => (
  <Tile id="maps" from="#7ddc76" to="#7ddc76">
    <path d="M0 28l16-12v54H0z" fill="#e082c5" />
    <path d="M0 8l14-8h24v70H16V22L0 28z" fill="#f0f1f3" />
    <path d="M36 34l34 24v12H36z" fill="#f4f4f6" />
    <path d="M38 52l24 18H38z" fill="#f4c843" />
    <path d="M48-4a28 28 0 0 0 26 27" fill="none" stroke="#dcdfe2" strokeWidth="9" />
    <path d="M19 0h17v34H19z" fill="#2f72ee" />
    <circle cx="27" cy="43" r="18" fill="#fff" />
    <circle cx="27" cy="43" r="14.500" fill="#2c76ee" />
    <path d="M27 32l8 20-8-5-8 5z" fill="#fff" />
  </Tile>
);

const petals = ["#f59a33", "#ecd434", "#a7cc4b", "#5fb678", "#5a9fe0", "#7d7fd0", "#c9609c", "#ea5145"];
const Photos = () => (
  <Tile id="photos" from="#fefefe" to="#f6f6f6">
    {petals.map((c, i) => (
      <ellipse key={c} cx="35" cy="19.500" rx="9" ry="14.500" fill={c} opacity=".85" transform={`rotate(${i * 45} 35 35)`} />
    ))}
  </Tile>
);

const FaceTime = () => (
  <Tile id="ft" from="#85f084" to="#55bf48">
    <rect x="10" y="20" width="34" height="31" rx="8" fill="#eff7ee" />
    <path d="M47 33l9-10c1-1 2-1 2 1v23c0 2-1 2-2 1l-9-9z" fill="#e1efe0" />
  </Tile>
);

const Calendar = () => (
  <div className="flex h-[70px] w-[70px] flex-col items-center overflow-hidden rounded-[16px] bg-[#f9f8f6]">
    <div className="flex h-[22px] w-full shrink-0 items-center justify-center bg-[#ea5a51] text-[14px] font-semibold leading-none text-white">
      APR
    </div>
    <div className="mt-[1px] text-[43px] font-light leading-[44px] tracking-[-1.500px] text-[#2b2a29]">27</div>
  </div>
);

const Contacts = () => (
  <svg viewBox="0 0 76 70" className="mr-[-6px] h-[70px] w-[76px]">
    <path d="M64 9h7v12h-7z" fill="#bfc1c4" />
    <path d="M64 23h8v13h-8z" fill="#5aabe0" />
    <path d="M64 37h8v12h-8z" fill="#ec9839" />
    <path d="M64 50h7v11h-7z" fill="#5ec455" />
    <rect width="70" height="70" rx="16" fill="#ab8350" />
    <path d="M16 0a16 16 0 0 0-16 16v38a16 16 0 0 0 9 14c-5-18-5-50 0-66z" fill="#95703f" />
    <circle cx="36" cy="35" r="22" fill="none" stroke="#8a6738" strokeWidth="2" />
    <circle cx="36" cy="30" r="8" fill="#8a6738" />
    <path d="M20 49c4-10 28-10 32 0-8 11-24 11-32 0z" fill="#8a6738" />
  </svg>
);

const Reminders = () => (
  <Tile id="rem" from="#fefefe" to="#f1f0ed">
    {[
      ["#2f74ee", 18],
      ["#e0453b", 35.5],
      ["#ec9433", 53],
    ].map(([c, y]) => (
      <g key={String(c)}>
        <circle cx="14" cy={y} r="5.500" fill="none" stroke={String(c)} strokeWidth="1.400" />
        <circle cx="14" cy={y} r="3.600" fill={String(c)} />
        <path d={`M27 ${y}h36`} stroke="#b9b8b5" strokeWidth="1.600" />
      </g>
    ))}
  </Tile>
);

const Notes = () => (
  <Tile id="notes" from="#fdfcf9" to="#e9e7e1">
    <path d="M0 0h70v18H0z" fill="#f9cf47" />
    <path d="M0 21h70" stroke="#c5c1b3" strokeWidth="2" strokeDasharray="1.500 1.500" />
    <path d="M0 35h70M0 53h70" stroke="#cfcdc7" strokeWidth="1.500" />
  </Tile>
);

const Freeform = () => (
  <Tile id="free" from="#ffffff" to="#fdfdfd">
    <circle cx="28" cy="42" r="20" fill="#ee6a4f" />
    <path d="M8 40c2-12 12-19 22-18l-8 30z" fill="#f19a5b" />
    <rect x="23" y="9" width="39" height="38" rx="5" fill="#56c3ef" />
    <path d="M23 30h24l-2 17H28c-3 0-5-2-5-5z" fill="#8ea6de" />
    <path d="M14 46c5-10 9-18 14-20 4-1-3 19 2 18 5-2 6-15 11-17 4-1-1 15 4 15s7-12 18-10" fill="none" stroke="#153b5e" strokeWidth="3.600" strokeLinecap="round" />
  </Tile>
);

const AppleTV = () => (
  <div className="flex h-[70px] w-[70px] items-center justify-center rounded-[16px] bg-[linear-gradient(#2b3632,#0c1110)] text-white">
    <FaApple className="mb-[3px] h-[27px] w-[22px]" />
    <span className="text-[31px] font-medium leading-none tracking-[-1px]">tv</span>
  </div>
);

const Music = () => (
  <Tile id="music" from="#ee6479" to="#e93a46">
    <path d="M25 54V19l25-6v34" fill="none" stroke="#fff" strokeWidth="3.200" />
    <path d="M25 16l25-6v9l-25 6z" fill="#fff" />
    <ellipse cx="19.500" cy="52.500" rx="7" ry="6" fill="#fff" />
    <ellipse cx="44.500" cy="47" rx="7" ry="6" fill="#fff" />
  </Tile>
);

const Keynote = () => (
  <Tile id="key" from="#5ec8f9" to="#3063e6">
    <path d="M18 10h34l3 17H15z" fill="#f3f5f7" />
    <path d="M14 27h42v3c0 1-1 2-2 2H16c-1 0-2-1-2-2z" fill="#d8dce2" />
    <circle cx="35" cy="18" r="6.500" fill="#45b3e8" />
    <path d="M35 18v-6.500a6.500 6.500 0 0 0-6.500 6.500z" fill="#e2564b" />
    <path d="M35 18h-6.500a6.500 6.500 0 0 0 6.500 6.500z" fill="#f0b93f" />
    <path d="M35 32v27" stroke="#dfe4ea" strokeWidth="2.600" />
    <path d="M24 59h22" stroke="#dfe4ea" strokeWidth="3" strokeLinecap="round" />
  </Tile>
);

const Numbers = () => (
  <Tile id="num" from="#95f27b" to="#5ccb41">
    <path d="M17.500 49v8M29.500 36v21M41.500 13v44M53.500 26v31" stroke="#f2faf0" strokeWidth="8.500" strokeLinecap="round" />
  </Tile>
);

const Pages = () => (
  <Tile id="pages" from="#f7b34a" to="#ed8c34">
    <path d="M54 13c3-1 5 1 4 4L24 52l-11 7 5-11z" fill="#f6f4f1" />
    <path d="M36 33l4 4" stroke="#b6afa6" strokeWidth="2" />
    <path d="M12 59.500h47" stroke="#fbe1bd" strokeWidth="2.400" />
  </Tile>
);

const AppStore = () => (
  <Tile id="store" from="#54b4f7" to="#2a5cd9">
    <path d="M39 15L20 49M31 15l22 40M16 57l2-4M12 43.500h47" fill="none" stroke="#f5f9fe" strokeWidth="5.600" strokeLinecap="round" />
  </Tile>
);

const Settings = () => (
  <Tile id="set" from="#d4dde2" to="#8c8b88">
    <circle cx="35" cy="35" r="28" fill="#45474a" />
    <circle cx="35" cy="35" r="28.500" fill="none" stroke="#2f3133" strokeWidth="3" strokeDasharray="2.400 2" />
    <circle cx="35" cy="35" r="21.500" fill="#a1a3a4" />
    <circle cx="35" cy="35" r="18.500" fill="#4a4c4e" />
    <path d="M35 35L23 17M35 35h21M35 35L24 54" stroke="#b0b2b3" strokeWidth="4" />
    <circle cx="35" cy="35" r="6.500" fill="#b0b2b3" />
    <circle cx="35" cy="35" r="3.500" fill="#3f4143" />
  </Tile>
);

const Phone = () => (
  <Tile id="phone" from="#d5d5d3" to="#bfc0be">
    <rect x="21" y="5" width="29" height="60" rx="6" fill="#17191c" />
    <rect x="23" y="7" width="25" height="56" rx="4" fill="#ef8a7c" />
    <path d="M23 50c4-16 14-24 25-27v36c0 2-2 4-4 4H27c-2 0-4-2-4-4z" fill="#1f6f8f" />
    <path d="M23 56c8-4 18-6 25-5v8c0 2-2 4-4 4H27c-2 0-4-2-4-4z" fill="#123c57" />
    <path d="M23 26c6-6 10-10 12-19h-8c-2 0-4 2-4 4z" fill="#f6c5ae" />
    <rect x="31" y="8" width="10" height="4" rx="2" fill="#111" />
  </Tile>
);

const VSCode = () => (
  <Tile id="vsc" from="#ffffff" to="#fcfcfc">
    <path d="M46 10l13 6v38l-13 6z" fill="#3f97e8" />
    <path d="M46 10v16L16 50c-1 1-2 1-3 0l-3-3c-1-1-1-2 0-3z" fill="#215fa6" />
    <path d="M46 60V44L16 20c-1-1-2-1-3 0l-3 3c-1 1-1 2 0 3z" fill="#3579c6" />
  </Tile>
);

const Docker = () => (
  <div className="flex h-[70px] w-[70px] items-center justify-center rounded-[16px] bg-[#418be6] text-white">
    <FaDocker className="h-[52px] w-[54px]" />
  </div>
);

const ChromeIcon = () => (
  <Tile id="chrome" from="#fbfbfa" to="#eeeeec">
    <circle cx="35" cy="35" r="30" fill="#4f9b52" />
    <path d="M35 35L9 20a30 30 0 0 1 52 0z" fill="#d84b3d" />
    <path d="M35 21h26.500A30 30 0 0 1 35 65l12-23z" fill="#f5be42" />
    <path d="M9 20l14 22 12-7V20z" fill="#d84b3d" />
    <path d="M9 20l13.500 22.500L35 50l-5 14.500A30 30 0 0 1 9 20z" fill="#4f9b52" />
    <circle cx="35" cy="35" r="14.500" fill="#fff" />
    <circle cx="35" cy="35" r="11.500" fill="#4077e4" />
  </Tile>
);

const WhatsApp = () => (
  <div className="flex h-[70px] w-[70px] items-center justify-center rounded-[16px] bg-[linear-gradient(#87f27f,#57bf49)] text-white">
    <FaWhatsapp className="h-[62px] w-[62px]" />
  </div>
);

const apps: { icon: React.ReactNode; badge?: string; dot?: boolean }[] = [
  { icon: <Finder />, dot: true },
  { icon: <Launchpad /> },
  { icon: <Safari /> },
  { icon: <Messages />, badge: "7" },
  { icon: <Mail /> },
  { icon: <Maps /> },
  { icon: <Photos /> },
  { icon: <FaceTime /> },
  { icon: <Calendar /> },
  { icon: <Contacts /> },
  { icon: <Reminders />, badge: "3" },
  { icon: <Notes /> },
  { icon: <Freeform /> },
  { icon: <AppleTV /> },
  { icon: <Music /> },
  { icon: <Keynote /> },
  { icon: <Numbers /> },
  { icon: <Pages /> },
  { icon: <AppStore /> },
  { icon: <Settings />, badge: "2" },
  { icon: <Phone /> },
];

const running = [<VSCode key="v" />, <Docker key="d" />, <ChromeIcon key="c" />, <WhatsApp key="w" />];

function DockItem({ icon, badge, dot }: { icon: React.ReactNode; badge?: string; dot?: boolean }) {
  return (
    <div className="relative h-[89px] w-[70px] shrink-0">
      {icon}
      {badge && (
        <div className="absolute right-[-12px] top-[-9px] flex h-[34px] w-[34px] items-center justify-center rounded-full bg-[#e24b3f] text-[20px] leading-none text-white">
          {badge}
        </div>
      )}
      {dot && <div className="absolute bottom-0 left-[31px] h-[8px] w-[8px] rounded-full bg-[#f5f5f2]" />}
    </div>
  );
}

const Folder = () => (
  <svg viewBox="0 0 74 68" className="h-[68px] w-[74px]">
    <path d="M0 8c0-4 2-7 6-7h15c4 0 5 5 9 5h38c3 0 5 2 5 5v20H0z" fill="#4ba3d8" />
    <rect y="15" width="74" height="53" rx="5" fill="#7bcbf8" />
    <path d="M0 60h74v3c0 3-2 5-5 5H5c-3 0-5-2-5-5z" fill="#57aee0" />
  </svg>
);

function Thumb({ kind }: { kind: "docker" | "whatsapp" }) {
  const docker = kind === "docker";
  return (
    <div className="relative h-[48px] w-[82px] shrink-0">
      <svg viewBox="0 0 82 48" className="h-[48px] w-[82px]">
        <rect width="82" height="48" fill={docker ? "#0d1117" : "#141a18"} />
        {docker ? (
          <g>
            <rect width="82" height="4" fill="#1a2f80" />
            <rect x="40" y="1" width="20" height="2" fill="#3450a8" />
            <path d="M3 9h7M3 12h7M3 16h6M20 8h20M20 12h14M20 20h8" stroke="#4b5666" />
            <path d="M22 28h56M22 32h56M22 36h56M22 40h56" stroke="#39424e" strokeDasharray="7 4" />
          </g>
        ) : (
          <g>
            <rect x="49" y="3" width="31" height="14" fill="#f0f0ee" />
            <rect x="68" y="18" width="12" height="9" fill="#d8e4da" />
            <rect x="68" y="24" width="12" height="4" fill="#1d5a48" />
            <path d="M5 8h14M5 13h14M5 18h14M5 23h14M5 28h14M5 33h14M5 38h14M5 43h14" stroke="#7b807d" strokeDasharray="2 1 8 3" />
            <path d="M22 36h20" stroke="#4a504d" />
            <path d="M20 0v48" stroke="#2b3330" />
          </g>
        )}
      </svg>
      <div
        className={`absolute bottom-[-16px] right-[1px] flex h-[27px] w-[27px] items-center justify-center rounded-[6px] text-white ${docker ? "bg-[#418be6]" : "bg-[#5fc853]"}`}
      >
        {docker ? <FaDocker className="h-[20px] w-[21px]" /> : <FaWhatsapp className="h-[23px] w-[23px]" />}
      </div>
    </div>
  );
}

const Trash = () => (
  <svg viewBox="0 0 64 84" className="h-[84px] w-[64px]">
    <path d="M8 18L12 5l9 3 6-7 8 5 9-4 4 8 7-2 2 12z" fill="#e7e8ea" />
    <path d="M16 14l5-8 4 9zM30 16l4-11 5 10zM46 15l4-8 3 8z" fill="#77797d" />
    <path d="M26 12h6v3h-6z" fill="#4ab0a8" />
    <path d="M0 12c0 10 64 10 64 0l-8 62c-2 12-46 12-48 0z" fill="#65676b" />
    <path d="M22 20l3 62c-9-1-16-3-17-8L1 15c4 3 12 4 21 5z" fill="#7c7e82" />
    <path d="M48 19l-6 62c8-1 13-3 14-7l7-59c-3 2-8 3-15 4z" fill="#55575b" />
    <ellipse cx="32" cy="72" rx="24" ry="7" fill="#a0a2a6" opacity=".45" />
    <path d="M0 12c0 10 64 10 64 0" fill="none" stroke="#9c9ea2" strokeWidth="2" />
  </svg>
);

function Dock() {
  return (
    <div className="absolute left-[74px] top-[1792px] flex h-[111px] w-[2792px] items-start rounded-[34px] border-2 border-[#97979b]/70 bg-[linear-gradient(90deg,#6f727e_0px,#777a8a_500px,#777884_1150px,#77747a_1500px,#7d7464_1750px,#7d7663_2000px,#807b74_2500px,#8b867f_2792px)] pl-[15px] pt-[15px] shadow-[0_0_0_1px_rgba(0,0,0,0.55)]">
      <div className="flex gap-[23px]">
        {apps.map((a, i) => (
          <DockItem key={i} {...a} />
        ))}
      </div>
      <div className="ml-[33px] mt-[-3px] h-[82px] w-[2px] bg-[#b5b1a6]" />
      <div className="ml-[29px] flex gap-[23px]">
        {running.map((icon, i) => (
          <DockItem key={i} icon={icon} dot />
        ))}
      </div>
      <div className="ml-[32px] mt-[-3px] h-[82px] w-[2px] bg-[#b5b1a6]" />
      <div className="ml-[29px] mt-[4px]">
        <Folder />
      </div>
      <div className="ml-[14px] mt-[11px] flex gap-[12px]">
        <Thumb kind="docker" />
        <Thumb kind="whatsapp" />
      </div>
      <div className="ml-[18px] mt-[-7px]">
        <Trash />
      </div>
    </div>
  );
}

/* ------------------------------------------------------------------ */
/* Desktop                                                             */
/* ------------------------------------------------------------------ */

function Wallpaper() {
  return (
    <div className="absolute inset-0 top-[72px] flex flex-col">
      <div className="h-[28px] shrink-0 bg-[linear-gradient(90deg,#cdd6c5_0px,#8fa37c_50px,#a8705c_90px,#a3705c_180px,#a8b78f_220px,#a3b08e_300px,#7fa04f_340px,#cfd0dc_400px,#c6c7d4_520px,#86a07a_550px,#d0d2b0_640px,#b9bf90_700px,#4f7048_745px,#8d9b96_800px,#d5dcc5_880px,#6b9440_930px,#cfd2b8_1010px,#5d8434_1085px,#d0d2b8_1190px,#4d7038_1290px,#59684b_1320px,#8c9c98_1372px,#93a97f_1441px,#c3c59a_1487px,#cfd0c8_1550px,#c5c8b5_1680px,#a9ae72_1720px,#4f812b_1751px,#4d8229_1831px,#7ca060_1889px,#9cb97f_2003px,#c8d0c2_2021px,#cfcfc6_2100px,#b8c69a_2178px,#86a25e_2270px,#8fae70_2320px,#4d7e33_2384px,#3f7a25_2465px,#c8ccb0_2488px,#5e9038_2545px,#669a45_2600px,#7ea568_2648px,#c3cba3_2717px,#c5cbb9_2800px,#bdcfb8_2890px,#a7c9a0_2940px)]" />
      <div className="flex grow justify-end bg-[#8d93a5]">
        <div className="flex w-[60px] flex-col items-end bg-[linear-gradient(#b0c8a4_0px,#b4c3a8_180px,#a9b6a0_330px,#84a673_440px,#4a7d33_520px,#558a38_640px,#355a27_740px,#1f2021_780px,#18191a_880px,#87442f_930px,#a55a41_1020px,#8fae6e_1080px,#b3ab8b_1180px,#9a9aa3_1260px,#9292a0_1500px,#9a9796_1672px,#c8c6c6_1812px)]">
          <div className="mt-[184px] flex h-[45px] w-[15px] items-start overflow-hidden bg-black pt-[9px]">
            <svg viewBox="0 0 15 17" className="h-[17px] w-[15px]">
              <rect width="15" height="17" fill="#6e6e6e" />
              <path d="M2 16V2l6 9 6-9v14" fill="none" stroke="#d6d6d6" strokeWidth="3" />
            </svg>
          </div>
          <div className="mt-[148px] h-[2px] w-[15px] bg-[#b7bdb4]" />
        </div>
      </div>
      <div className="h-[150px] shrink-0 bg-[linear-gradient(90deg,#9ea4b8_0px,#a9aec4_60px,#b9bdd4_500px,#9a9bb5_900px,#b4b6c9_1100px,#c0c2cf_1500px,#c9c6c0_1700px,#b9a98a_1850px,#cdcac5_2000px,#bda988_2200px,#cbc8c4_2400px,#c4b08a_2620px,#c9c8c4_2740px,#cbc9c9_2940px)]" />
    </div>
  );
}

export default function App() {
  return (
    <div className={`relative h-[1912px] w-[2940px] overflow-hidden ${SF}`}>
      <Wallpaper />
      <div className="relative">
        <MenuBar />
      </div>
      <BrowserWindow />
      <Dock />
    </div>
  );
}
